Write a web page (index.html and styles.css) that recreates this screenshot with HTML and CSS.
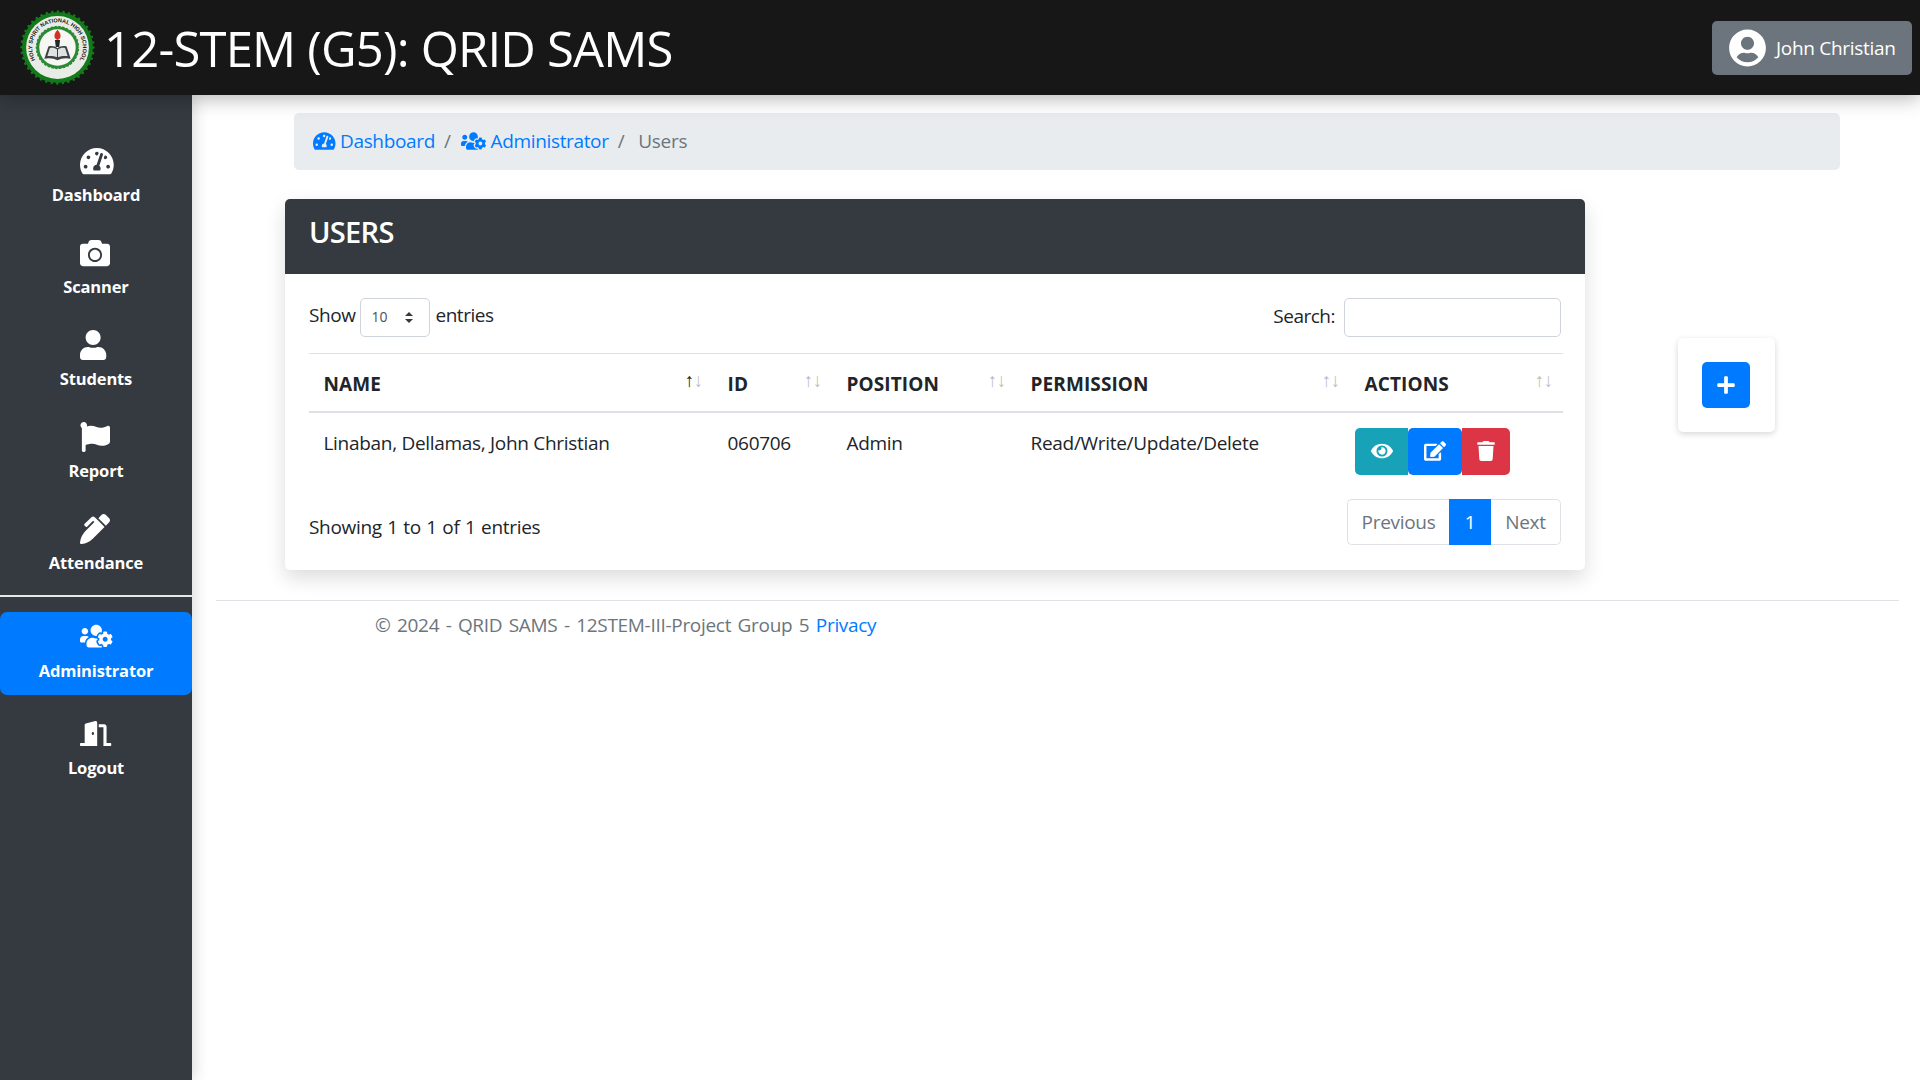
FILE: index.html
```html
<!DOCTYPE html>
<html lang="en">
<head>
<meta charset="utf-8">
<title>12-STEM (G5): QRID SAMS</title>
<link rel="stylesheet" href="styles.css">
</head>
<body>
<svg class="defs" width="0" height="0" aria-hidden="true">
  <symbol id="i-gauge" viewBox="0 0 576 512" preserveAspectRatio="xMinYMid meet"><path d="M288 32C128.94 32 0 160.94 0 320c0 52.8 14.25 102.26 39.06 144.8 5.61 9.62 16.3 15.2 27.44 15.2h443c11.14 0 21.83-5.58 27.44-15.2C561.75 422.26 576 372.8 576 320c0-159.06-128.94-288-288-288zm0 64c14.71 0 26.58 10.13 30.32 23.65-1.11 2.26-2.64 4.23-3.45 6.67l-9.22 27.67c-5.13 3.49-10.97 6.01-17.64 6.01-17.67 0-32-14.33-32-32S270.33 96 288 96zM96 384c-17.67 0-32-14.33-32-32s14.33-32 32-32 32 14.33 32 32-14.33 32-32 32zm48-160c-17.67 0-32-14.33-32-32s14.33-32 32-32 32 14.33 32 32-14.33 32-32 32zm246.77-72.41l-61.33 184C343.13 347.33 352 364.54 352 384c0 11.72-3.38 22.55-8.88 32H232.88c-5.5-9.45-8.88-20.28-8.88-32 0-33.94 26.5-61.43 59.9-63.59l61.34-184.01c4.17-12.56 17.73-19.45 30.36-15.17 12.57 4.19 19.35 17.77 15.17 30.36zm14.66 57.2l15.52-46.55c3.47-1.29 7.13-2.23 11.05-2.23 17.67 0 32 14.33 32 32s-14.33 32-32 32c-11.38-.01-20.89-6.28-26.57-15.22zM480 384c-17.67 0-32-14.33-32-32s14.33-32 32-32 32 14.33 32 32-14.33 32-32 32z"/></symbol>
  <symbol id="i-camera" viewBox="0 0 512 512" preserveAspectRatio="xMinYMid meet"><path d="M512 144v288c0 26.5-21.5 48-48 48H48c-26.5 0-48-21.5-48-48V144c0-26.5 21.5-48 48-48h88l12.3-32.9c7-18.7 24.9-31.1 44.9-31.1h125.5c20 0 37.9 12.4 44.9 31.1L376 96h88c26.5 0 48 21.5 48 48zM376 288c0-66.2-53.8-120-120-120s-120 53.8-120 120 53.8 120 120 120 120-53.8 120-120zm-32 0c0 48.5-39.5 88-88 88s-88-39.5-88-88 39.5-88 88-88 88 39.5 88 88z"/></symbol>
  <symbol id="i-user" viewBox="0 0 448 512" preserveAspectRatio="xMinYMid meet"><path d="M224 256c70.7 0 128-57.3 128-128S294.7 0 224 0 96 57.3 96 128s57.3 128 128 128zm89.6 32h-16.7c-22.2 10.2-46.9 16-72.9 16s-50.6-5.8-72.9-16h-16.7C60.2 288 0 348.2 0 422.4V464c0 26.5 21.5 48 48 48h352c26.5 0 48-21.5 48-48v-41.6c0-74.2-60.2-134.4-134.4-134.4z"/></symbol>
  <symbol id="i-flag" viewBox="0 0 512 512" preserveAspectRatio="xMinYMid meet"><path d="M349.565 98.783C295.978 98.783 251.721 64 184.348 64c-24.955 0-47.309 4.384-68.045 12.013a55.947 55.947 0 0 0 3.586-23.562C118.117 24.015 94.806 1.206 66.338.048 34.345-1.254 8 24.296 8 56c0 19.026 9.497 35.825 24 45.945V488c0 13.255 10.745 24 24 24h16c13.255 0 24-10.745 24-24v-94.4c28.311-12.064 63.582-22.122 114.435-22.122 53.588 0 97.844 34.783 165.217 34.783 48.169 0 86.667-16.294 122.505-40.858C506.84 359.452 512 349.571 512 339.045v-243.1c0-23.393-24.269-38.87-45.485-29.016-34.338 15.948-76.454 31.854-116.95 31.854z"/></symbol>
  <symbol id="i-pen" viewBox="0 0 512 512" preserveAspectRatio="xMinYMid meet"><path d="M497.94 74.17l-60.11-60.11c-18.75-18.75-49.16-18.75-67.91 0l-56.55 56.55 128.02 128.02 56.55-56.55c18.75-18.75 18.75-49.15 0-67.91zm-246.8-20.53c-15.62-15.62-40.94-15.62-56.56 0L75.8 172.43c-6.25 6.25-6.25 16.38 0 22.62l22.63 22.63c6.25 6.25 16.38 6.25 22.63 0l101.82-101.82 22.63 22.62L93.95 290.03A327.038 327.038 0 0 0 .17 485.11l-.03.23c-1.7 15.28 11.21 28.2 26.49 26.51a327.02 327.02 0 0 0 195.34-93.8l196.79-196.79-82.77-82.77-84.85-84.85z"/></symbol>
  <symbol id="i-users-cog" viewBox="0 0 640 512" preserveAspectRatio="xMinYMid meet"><path d="M610.5 341.3c2.6-14.1 2.6-28.5 0-42.6l25.8-14.9c3-1.7 4.3-5.2 3.3-8.5-6.7-21.6-18.2-41.2-33.2-57.4-2.3-2.5-6-3.1-9-1.4l-25.8 14.9c-10.9-9.3-23.4-16.5-36.9-21.3v-29.8c0-3.4-2.4-6.4-5.7-7.1-22.3-5-45-4.8-66.2 0-3.3.7-5.7 3.7-5.7 7.1v29.8c-13.5 4.8-26 12-36.9 21.3l-25.8-14.9c-2.9-1.7-6.7-1.1-9 1.4-15 16.2-26.5 35.8-33.2 57.4-1 3.3.4 6.8 3.3 8.5l25.8 14.9c-2.6 14.1-2.6 28.5 0 42.6l-25.8 14.9c-3 1.7-4.3 5.2-3.3 8.5 6.7 21.6 18.2 41.1 33.2 57.4 2.3 2.5 6 3.1 9 1.4l25.8-14.9c10.9 9.3 23.4 16.5 36.9 21.3v29.8c0 3.4 2.4 6.4 5.7 7.1 22.3 5 45 4.8 66.2 0 3.3-.7 5.7-3.7 5.7-7.1v-29.8c13.5-4.8 26-12 36.9-21.3l25.8 14.9c2.9 1.7 6.7 1.1 9-1.4 15-16.2 26.5-35.8 33.2-57.4 1-3.3-.4-6.8-3.3-8.5l-25.8-14.9zM496 368.5c-26.8 0-48.5-21.8-48.5-48.5s21.8-48.5 48.5-48.5 48.5 21.8 48.5 48.5-21.7 48.5-48.5 48.5zM96 224c35.3 0 64-28.7 64-64s-28.7-64-64-64-64 28.7-64 64 28.7 64 64 64zm224 32c1.9 0 3.7-.5 5.6-.6 8.3-21.7 20.5-42.1 36.3-59.2 7.4-8 17.9-12.6 28.9-12.6 6.9 0 13.7 1.8 19.6 5.3l7.9 4.6c.8-.5 1.6-.9 2.4-1.4 7-14.6 11.2-30.8 11.2-48 0-61.9-50.1-112-112-112S208 82.1 208 144c0 61.9 50.1 112 112 112zm105.2 194.5c-2.3-1.2-4.6-2.6-6.8-3.9-8.2 4.8-15.3 9.8-27.5 9.8-10.9 0-21.4-4.6-28.9-12.6-18.3-19.8-32.3-43.9-40.2-69.6-10.7-34.5 24.9-49.7 25.8-50.3-.1-2.6-.1-5.2 0-7.8l-7.9-4.6c-3.8-2.2-7-5-9.8-8.1-3.3.2-6.5.6-9.8.6-24.6 0-47.6-6-68.5-16h-8.3C179.6 288 128 339.6 128 403.2V432c0 26.5 21.5 48 48 48h255.4c-3.7-6-6.2-12.8-6.2-20.3v-9.2zM173.1 274.6C161.5 263.1 145.6 256 128 256H64c-35.3 0-64 28.7-64 64v32c0 17.7 14.3 32 32 32h65.9c6.3-47.4 34.9-87.3 75.2-109.4z"/></symbol>
  <symbol id="i-door" viewBox="0 0 640 512" preserveAspectRatio="xMinYMid meet"><path d="M624 448h-80V113.45C544 86.19 522.47 64 496 64H384v64h96v384h144c8.84 0 16-7.16 16-16v-32c0-8.84-7.16-16-16-16zM312.24 1.01l-192 49.74C105.99 54.44 96 67.7 96 82.92V448H16c-8.84 0-16 7.16-16 16v32c0 8.84 7.16 16 16 16h336V33.18c0-21.58-19.56-37.41-39.76-32.17zM264 288c-13.25 0-24-14.33-24-32s10.75-32 24-32 24 14.33 24 32-10.75 32-24 32z"/></symbol>
  <symbol id="i-user-circle" viewBox="0 0 496 512"><path d="M248 8C111 8 0 119 0 256s111 248 248 248 248-111 248-248S385 8 248 8zm0 96c48.6 0 88 39.4 88 88s-39.4 88-88 88-88-39.4-88-88 39.4-88 88-88zm0 344c-58.7 0-111.3-26.6-146.5-68.2 18.8-35.4 55.6-59.8 98.5-59.8 2.4 0 4.8.4 7.1 1.1 13 4.2 26.6 6.9 40.9 6.9 14.3 0 28-2.7 40.9-6.9 2.3-.7 4.7-1.1 7.1-1.1 42.9 0 79.7 24.4 98.5 59.8C359.3 421.4 306.7 448 248 448z"/></symbol>
  <symbol id="i-eye" viewBox="0 0 576 512"><path d="M572.52 241.4C518.29 135.59 410.93 64 288 64S57.68 135.64 3.48 241.41a32.35 32.35 0 0 0 0 29.19C57.71 376.41 165.07 448 288 448s230.32-71.64 284.52-177.41a32.35 32.35 0 0 0 0-29.19zM288 400a144 144 0 1 1 144-144 143.93 143.93 0 0 1-144 144zm0-240a95.31 95.31 0 0 0-25.31 3.79 47.85 47.85 0 0 1-66.9 66.9A95.78 95.78 0 1 0 288 160z"/></symbol>
  <symbol id="i-edit" viewBox="0 0 576 512"><path d="M402.6 83.2l90.2 90.2c3.8 3.8 3.8 10 0 13.8L274.4 405.6l-92.8 10.3c-12.4 1.4-22.9-9.1-21.5-21.5l10.3-92.8L388.8 83.2c3.8-3.8 10-3.8 13.8 0zm162-22.9l-48.8-48.8c-15.2-15.2-39.9-15.2-55.2 0l-35.4 35.4c-3.8 3.8-3.8 10 0 13.8l90.2 90.2c3.8 3.8 10 3.8 13.8 0l35.4-35.4c15.2-15.3 15.2-40 0-55.2zM384 346.2V448H64V128h229.8c3.2 0 6.2-1.3 8.5-3.5l40-40c7.6-7.6 2.2-20.5-8.5-20.5H48C21.5 64 0 85.5 0 112v352c0 26.5 21.5 48 48 48h352c26.5 0 48-21.5 48-48V306.2c0-10.7-12.9-16-20.5-8.5l-40 40c-2.2 2.3-3.5 5.3-3.5 8.5z"/></symbol>
  <symbol id="i-trash" viewBox="0 0 448 512"><path d="M432 32H312l-9.4-18.7A24 24 0 0 0 281.1 0H166.8a23.72 23.72 0 0 0-21.4 13.3L136 32H16A16 16 0 0 0 0 48v32a16 16 0 0 0 16 16h416a16 16 0 0 0 16-16V48a16 16 0 0 0-16-16zM53.2 467a48 48 0 0 0 47.9 45h245.8a48 48 0 0 0 47.9-45L416 128H32z"/></symbol>
  <symbol id="i-plus" viewBox="0 0 448 512"><path d="M416 208H272V64c0-17.67-14.33-32-32-32h-32c-17.67 0-32 14.33-32 32v144H32c-17.67 0-32 14.33-32 32v32c0 17.67 14.33 32 32 32h144v144c0 17.67 14.33 32 32 32h32c17.67 0 32-14.33 32-32V304h144c17.67 0 32-14.33 32-32v-32c0-17.67-14.33-32-32-32z"/></symbol>
</svg>

<header class="topbar">
  <div class="brand">
    <svg class="logo" viewBox="0 0 76 76" role="img" aria-label="Holy Spirit National High School seal">
      <circle cx="38" cy="38" r="35" fill="#137a1c"/>
      <circle cx="38" cy="38" r="35.5" fill="none" stroke="#137a1c" stroke-width="2.5" stroke-linecap="round" stroke-dasharray="0.1 5.48"/>
      <circle cx="38" cy="38" r="31" fill="#e9ece6"/>
      <path id="seal-arc" d="M25.5 59.65 A25 25 0 1 1 50.5 59.65" fill="none"/>
      <text class="seal-text"><textPath href="#seal-arc" startOffset="50%" text-anchor="middle">HOLY SPIRIT NATIONAL HIGH SCHOOL</textPath></text>
      <circle cx="38" cy="38" r="21.5" fill="#2a8a33"/>
      <circle cx="38" cy="38" r="21.5" fill="none" stroke="#e9ece6" stroke-width="1.5" stroke-dasharray="1.5 2.5"/>
      <circle cx="38" cy="38" r="18" fill="#f6f6f2"/>
      <path d="M38 20.5c2.5 3 3.5 5 2.8 7.5-.4 1.400-1.5 2.5-2.8 2.5s-2.400-1.100-2.800-2.5c-.7-2.5.3-4.5 2.8-7.5z" fill="#d5301f"/>
      <path d="M35.5 30.5h5l-.8 7h-3.400z" fill="#23282a"/>
      <path d="M25 49l4-12c3.500-1 7 0 9 1.800 2-1.800 5.500-2.800 9-1.800l4 12c-4.500-1-9.500-.5-13 1.500-3.500-2-8.500-2.500-13-1.500z" fill="#3c4246"/>
      <path d="M28 46.500l2.500-8c2.500-.5 5.500 0 7 1.500v7.500c-2.500-1-6-1.400-9.500-1zM48 46.500l-2.500-8c-2.500-.5-5.500 0-7 1.500v7.500c2.500-1 6-1.400 9.500-1z" fill="#dfe2e0"/>
    </svg>
    <h1 class="title">12-STEM (G5): QRID SAMS</h1>
  </div>
  <button class="user-btn" type="button">
    <svg class="user-icon"><use href="#i-user-circle"/></svg>
    <span>John Christian</span>
  </button>
</header>

<div class="layout">
  <nav class="sidebar">
    <a class="nav-item"><svg class="nav-icon"><use href="#i-gauge"/></svg><span>Dashboard</span></a>
    <a class="nav-item"><svg class="nav-icon"><use href="#i-camera"/></svg><span>Scanner</span></a>
    <a class="nav-item"><svg class="nav-icon"><use href="#i-user"/></svg><span>Students</span></a>
    <a class="nav-item"><svg class="nav-icon"><use href="#i-flag"/></svg><span>Report</span></a>
    <a class="nav-item"><svg class="nav-icon"><use href="#i-pen"/></svg><span>Attendance</span></a>
    <hr class="nav-divider">
    <a class="nav-item nav-active"><svg class="nav-icon"><use href="#i-users-cog"/></svg><span>Administrator</span></a>
    <a class="nav-item nav-logout"><svg class="nav-icon"><use href="#i-door"/></svg><span>Logout</span></a>
  </nav>

  <main class="content">
    <ol class="breadcrumb">
      <li><a class="crumb-link"><svg class="crumb-icon"><use href="#i-gauge"/></svg>Dashboard</a></li>
      <li class="crumb-sep">/</li>
      <li><a class="crumb-link crumb-link-admin"><svg class="crumb-icon crumb-icon-wide"><use href="#i-users-cog"/></svg>Administrator</a></li>
      <li class="crumb-sep crumb-sep-last">/</li>
      <li class="crumb-current">Users</li>
    </ol>

    <div class="panels">
      <section class="card">
        <h2 class="card-head">USERS</h2>
        <div class="card-body">
          <div class="tools">
            <label class="length">Show
              <select class="length-select"><option>10</option></select>
              entries</label>
            <label class="search">Search: <input class="search-input" type="search"></label>
          </div>
          <table class="users">
            <colgroup>
              <col class="col-name"><col class="col-id"><col class="col-pos"><col class="col-perm"><col class="col-act">
            </colgroup>
            <thead>
              <tr>
                <th><div class="th-in">NAME<span class="sort"><b class="on">↑</b><b>↓</b></span></div></th>
                <th><div class="th-in">ID<span class="sort"><b>↑</b><b>↓</b></span></div></th>
                <th><div class="th-in">POSITION<span class="sort"><b>↑</b><b>↓</b></span></div></th>
                <th><div class="th-in">PERMISSION<span class="sort"><b>↑</b><b>↓</b></span></div></th>
                <th><div class="th-in">ACTIONS<span class="sort"><b>↑</b><b>↓</b></span></div></th>
              </tr>
            </thead>
            <tbody>
              <tr>
                <td>Linaban, Dellamas, John Christian</td>
                <td>060706</td>
                <td>Admin</td>
                <td>Read/Write/Update/Delete</td>
                <td class="actions">
                  <div class="btn-group">
                    <button class="act act-view" type="button"><svg class="act-icon"><use href="#i-eye"/></svg></button>
                    <button class="act act-edit" type="button"><svg class="act-icon"><use href="#i-edit"/></svg></button>
                    <button class="act act-del" type="button"><svg class="act-icon act-icon-trash"><use href="#i-trash"/></svg></button>
                  </div>
                </td>
              </tr>
            </tbody>
          </table>
          <div class="table-foot">
            <div class="info">Showing 1 to 1 of 1 entries</div>
            <ul class="pager">
              <li class="page page-prev">Previous</li>
              <li class="page page-cur">1</li>
              <li class="page page-next">Next</li>
            </ul>
          </div>
        </div>
      </section>

      <aside class="add-card">
        <button class="add-btn" type="button"><svg class="add-icon"><use href="#i-plus"/></svg></button>
      </aside>
    </div>

    <footer class="foot">© 2024 - QRID SAMS - 12STEM-III-Project Group 5 <a class="foot-link">Privacy</a></footer>
  </main>
</div>
</body>
</html>
```

FILE: styles.css
```css
* { box-sizing: border-box; }
html, body { margin: 0; height: 100%; }
body {
  font-family: "Open Sans", "Noto Sans", "Liberation Sans", sans-serif;
  font-size: 19px;
  letter-spacing: -.3px;
  color: #212529;
  background: #fff;
  overflow: hidden;
}
.defs { position: absolute; }
svg { fill: currentColor; display: block; }

.topbar {
  position: relative;
  z-index: 2;
  height: 95px;
  background: #171717;
  display: flex;
  align-items: center;
  justify-content: space-between;
  padding: 0 8px 0 19px;
  box-shadow: 0 4px 18px rgba(0,0,0,.28);
}
.brand { display: flex; align-items: center; gap: 8px; }
.logo { width: 77px; height: 77px; }
.seal-text { font: 700 5.5px "Liberation Sans", sans-serif; fill: #161616; letter-spacing: 0; }
.title {
  margin: 0;
  font-size: 49px;
  font-weight: 400;
  color: #fff;
  letter-spacing: -.8px;
  white-space: nowrap;
}
.user-btn {
  width: 200px;
  height: 54px;
  background: #6c757d;
  border: 0;
  border-radius: 5px;
  color: #fff;
  display: flex;
  align-items: center;
  gap: 10px;
  padding: 0 0 0 17px;
  font: inherit;
  letter-spacing: -.3px;
}
.user-icon { width: 37px; height: 38px; }

.layout { display: flex; height: 985px; }
.sidebar {
  position: relative;
  z-index: 1;
  flex: 0 0 192px;
  background: #343a40;
  color: #fff;
  padding-top: 43px;
  display: flex;
  flex-direction: column;
  box-shadow: 2px 0 14px rgba(0,0,0,.16);
}
.nav-item {
  height: 92px;
  flex: none;
  display: flex;
  flex-direction: column;
  align-items: center;
  padding-top: 8px;
  font-size: 16.5px;
  font-weight: 700;
  letter-spacing: -.15px;
  line-height: 24px;
}
.nav-icon { width: 36px; height: 30px; margin: 0 0 7px 4px; }
.nav-divider {
  width: 100%;
  margin: -3px 0 15px;
  border: 0;
  border-top: 2px solid #e8e8e8;
}
.nav-active {
  height: 83px;
  padding-top: 11px;
  background: #007bff;
  border-radius: 7px;
}
.nav-active .nav-icon { height: 26px; margin-bottom: 10px; }
.nav-logout { padding-top: 26px; }
.nav-logout .nav-icon { height: 25px; margin-bottom: 10px; }

.content { flex: 1; min-width: 0; padding-top: 18px; }
.breadcrumb {
  list-style: none;
  margin: 0 80px 29px 102px;
  height: 57px;
  padding: 0 19px 2px;
  background: #e9ecef;
  border-radius: 5px;
  display: flex;
  align-items: center;
  color: #6c757d;
}
.crumb-link { display: flex; align-items: center; gap: 4px; color: #007bff; letter-spacing: -.35px; }
.crumb-link-admin { gap: 5px; }
.crumb-icon { width: 23px; height: 20px; }
.crumb-icon-wide { width: 25px; }
.crumb-sep { margin: 0 10px 0 9px; }
.crumb-sep-last { margin: 0 14px 0 9px; }

.panels { display: flex; align-items: flex-start; margin-left: 93px; }
.card {
  width: 1300px;
  height: 371px;
  background: #fff;
  border-radius: 5px;
  box-shadow: 0 8px 20px rgba(0,0,0,.14);
  overflow: hidden;
}
.card-head {
  margin: 0;
  height: 75px;
  background: #343a40;
  color: #fff;
  font-size: 29px;
  font-weight: 600;
  letter-spacing: -.7px;
  line-height: 66px;
  padding-left: 24px;
}
.card-body { padding: 24px 24px 0; }
.tools { display: flex; justify-content: space-between; align-items: flex-start; height: 39px; margin-bottom: 16px; }
.length { display: flex; align-items: flex-start; gap: 5px; line-height: 34px; letter-spacing: -.45px; }
.length-select {
  width: 70px;
  height: 39px;
  border: 1px solid #ced4da;
  border-radius: 5px;
  background: #fff url("data:image/svg+xml,%3Csvg xmlns='http://www.w3.org/2000/svg' width='10' height='13'%3E%3Cpath d='M1 5l4-4 4 4zM1 8h8l-4 4z' fill='%23343a40'/%3E%3C/svg%3E") no-repeat right 15px center;
  appearance: none;
  padding: 0 0 2px 10px;
  font: inherit;
  font-size: 14px;
  color: #495057;
}
.search { display: flex; align-items: flex-start; gap: 9px; line-height: 37px; letter-spacing: -.5px; }
.search-input { width: 217px; height: 39px; border: 1px solid #ced4da; border-radius: 5px; background: #fff; }

.users { width: 1254px; border-collapse: collapse; table-layout: fixed; }
.col-name { width: 404px; }
.col-id { width: 119px; }
.col-pos { width: 184px; }
.col-perm { width: 334px; }
.col-act { width: 213px; }
.users th {
  height: 58px;
  padding: 4px 10px 0 14.5px;
  border-top: 1px solid #dee2e6;
  border-bottom: 2px solid #dee2e6;
  text-align: left;
  font-weight: 700;
  letter-spacing: .1px;
  color: #212529;
}
.th-in { display: flex; justify-content: space-between; align-items: center; }
.sort { display: flex; font: 400 19px/20px "Liberation Sans", sans-serif; margin-top: -7px; letter-spacing: 0; }
.sort b { display: flex; justify-content: center; width: 9px; font-weight: 400; opacity: .3; white-space: nowrap; }
.sort .on { opacity: 1; }
.users td { padding: 17px 15px 0 14.5px; vertical-align: top; height: 70px; }
.users .actions { padding: 15px 0 0 5px; }
.btn-group { display: flex; }
.act {
  height: 47px;
  border: 0;
  color: #fff;
  padding: 0;
  display: flex;
  align-items: center;
  justify-content: center;
}
.act-view { width: 53px; background: #17a2b8; border-radius: 5px 0 0 5px; }
.act-edit { width: 54px; background: #007bff; border-radius: 5px; }
.act-del { width: 48px; background: #dc3545; border-radius: 0 5px 5px 0; }
.act-icon { width: 22px; height: 20px; }
.act-icon-trash { width: 18px; height: 20px; }

.table-foot { display: flex; justify-content: space-between; align-items: center; margin-top: 17px; }
.info { padding-top: 10px; word-spacing: .8px; }
.pager { list-style: none; margin: 0; padding: 0; display: flex; height: 46px; }
.page {
  display: flex;
  align-items: center;
  justify-content: center;
  border: 1px solid #dee2e6;
  color: #6c757d;
}
.page-prev { width: 102px; border-radius: 5px 0 0 5px; border-right: 0; }
.page-cur { width: 42px; background: #007bff; border-color: #007bff; color: #fff; }
.page-next { width: 70px; border-radius: 0 5px 5px 0; border-left: 0; }

.add-card {
  width: 97px;
  height: 94px;
  margin: 139px 0 0 93px;
  padding-right: 2px;
  background: #fff;
  border-radius: 5px;
  box-shadow: 0 2px 6px rgba(0,0,0,.16);
  display: flex;
  align-items: center;
  justify-content: center;
}
.add-btn {
  width: 48px;
  height: 46px;
  background: #007bff;
  border: 0;
  border-radius: 5px;
  color: #fff;
  display: flex;
  align-items: center;
  justify-content: center;
  padding: 0;
}
.add-icon { width: 18px; height: 20px; }

.foot {
  margin: 30px 21px 0 24px;
  padding: 11px 0 0 159px;
  border-top: 1px solid #dee2e6;
  color: #6c757d;
  word-spacing: 1.8px;
}
.foot-link { color: #007bff; }
```
